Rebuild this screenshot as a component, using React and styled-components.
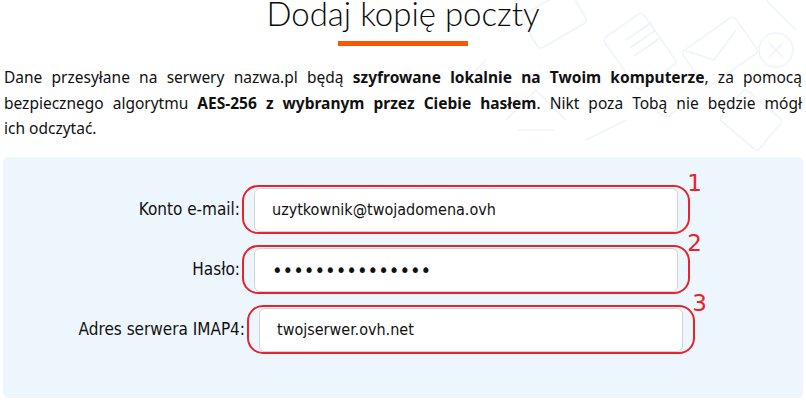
import React from 'react';
import styled, { createGlobalStyle } from 'styled-components';

const GlobalStyle = createGlobalStyle`
  html, body {
    margin: 0;
    padding: 0;
    background: #fff;
  }
`;

const Page = styled.div`
  position: relative;
  width: 806px;
  height: 402px;
  overflow: hidden;
  padding: 0 3px;
  box-sizing: border-box;
  font-family: "Noto Sans", "Open Sans", sans-serif;
  color: #111;
`;

const Decor = styled.svg`
  position: absolute;
  top: 0;
  right: 0;
  z-index: 0;
  pointer-events: none;
`;

const Header = styled.header`
  position: relative;
  z-index: 1;
  text-align: center;
  padding-top: 1px;
`;

const Title = styled.h1`
  margin: -8px 0 0;
  font-family: Lato, "Noto Sans", sans-serif;
  font-weight: 300;
  font-size: 33px;
  line-height: 40px;
  color: #0b0b0b;
`;

const Bar = styled.div`
  width: 130px;
  height: 5px;
  margin: 8px auto 0;
  background: #fb5607;
`;

const Intro = styled.div`
  position: relative;
  z-index: 1;
  margin-top: 19px;
  padding: 0 1px;
  font-size: 15.5px;
  line-height: 25.6px;

  b {
    font-weight: 700;
  }
`;

// each line of the intro is justified on its own, the last one is not
const Line = styled.span`
  display: block;
  text-align: justify;
  text-align-last: ${(p) => (p.$last ? 'left' : 'justify')};
`;

const Panel = styled.section`
  position: relative;
  z-index: 1;
  margin-top: 15px;
  height: 241px;
  box-sizing: border-box;
  padding-top: 28px;
  background: #eef6fd;
  border-radius: 5px;
  display: flex;
  flex-direction: column;
  gap: 11px;
`;

const Row = styled.div`
  display: flex;
  align-items: center;
  padding-left: ${(p) => p.$shift || 0}px;
`;

const Label = styled.label`
  width: 237px;
  text-align: right;
  font-family: "DejaVu Sans Condensed", "DejaVu Sans", sans-serif;
  font-size: 17px;
  color: #111;
`;

const Outline = styled.div`
  position: relative;
  margin-left: 2px;
  padding: 1px 10px 0;
  border: 2px solid #e9222c;
  border-radius: 16px;
`;

const Badge = styled.span`
  position: absolute;
  top: -15px;
  right: -14px;
  font-family: "DejaVu Sans", sans-serif;
  font-size: 23px;
  line-height: 1;
  color: #e9222c;
`;

const Field = styled.input`
  display: block;
  width: 424px;
  height: 44px;
  box-sizing: border-box;
  padding: 0 0 0 17px;
  border: 1px solid #d3d3d3;
  border-radius: 6px;
  background: #fff;
  font-family: "DejaVu Sans Condensed", "DejaVu Sans", sans-serif;
  font-size: ${(p) => (p.type === 'password' ? '20px' : '16px')};
  color: #111;
  outline: none;
`;

const rows = [
  { label: 'Konto e-mail:', value: 'uzytkownik@twojadomena.ovh', type: 'text' },
  { label: 'Hasło:', value: 'haslohaslohaslo', type: 'password' },
  { label: 'Adres serwera IMAP4:', value: 'twojserwer.ovh.net', type: 'text', shift: 5 },
];

function Pattern() {
  const s = { fill: 'none', stroke: '#eff4f9', strokeWidth: 1.6, strokeLinejoin: 'round' };
  return (
    <Decor width="340" height="160" viewBox="0 0 340 160">
      <g {...s}>
        <rect x="150" y="20" width="48" height="62" rx="4" transform="rotate(-35 174 51)" />
        <path d="M160 40 l26 -18 M164 48 l26 -18 M168 56 l26 -18" />
        <rect x="222" y="30" width="64" height="44" rx="4" transform="rotate(-35 254 52)" />
        <path d="M218 50 l30 10 l22 -30" />
        <circle cx="310" cy="50" r="17" />
        <path d="M303 43 l14 14 M317 43 l-14 14" />
        <rect x="60" y="0" width="56" height="38" rx="4" transform="rotate(-30 88 19)" />
        <path d="M40 120 l30 -30 l30 30 M52 130 h36" />
        <rect x="260" y="100" width="50" height="40" rx="4" transform="rotate(40 285 120)" />
        <path d="M170 110 q10 -12 20 0 t20 0 M120 140 l40 -20" />
        <path d="M0 80 l20 -20 M300 0 l30 30" />
      </g>
    </Decor>
  );
}

export default function App() {
  return (
    <>
      <GlobalStyle />
      <Page>
        <Pattern />
        <Header>
          <Title>Dodaj kopię poczty</Title>
          <Bar />
        </Header>
        <Intro>
          <Line>
            Dane przesyłane na serwery nazwa.pl będą <b>szyfrowane lokalnie na Twoim komputerze</b>, za pomocą
          </Line>
          <Line>
            bezpiecznego algorytmu <b>AES-256 z wybranym przez Ciebie hasłem</b>. Nikt poza Tobą nie będzie mógł
          </Line>
          <Line $last>ich odczytać.</Line>
        </Intro>
        <Panel>
          {rows.map((r, i) => (
            <Row key={r.label} $shift={r.shift}>
              <Label>{r.label}</Label>
              <Outline>
                <Field type={r.type} defaultValue={r.value} readOnly />
                <Badge>{i + 1}</Badge>
              </Outline>
            </Row>
          ))}
        </Panel>
      </Page>
    </>
  );
}
